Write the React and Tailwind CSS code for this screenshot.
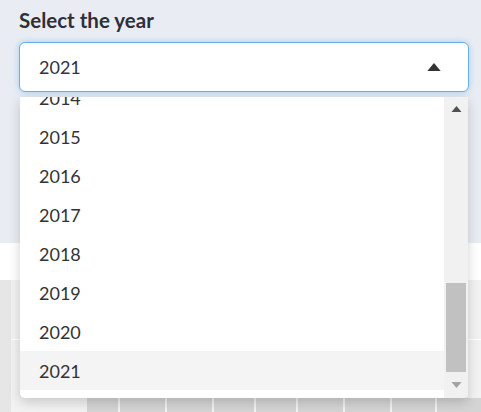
import { useState } from "react";

const years = Array.from({ length: 22 }, (_, i) => 2000 + i);

function Caret({ up = true, className = "" }) {
  return (
    <svg viewBox="0 0 10 6" className={className} fill="currentColor">
      {up ? <path d="M0 6 L5 0 L10 6 Z" /> : <path d="M0 0 L5 6 L10 0 Z" />}
    </svg>
  );
}

function Backdrop() {
  const cells = [31, 45, 45, 40, 40, 45, 45, 43, 44];
  return (
    <div className="flex flex-col flex-1">
      <div className="h-[37px] bg-white" />
      <div className="flex flex-1">
        <div className="w-[12px] bg-[#e6e6e6]" />
        <div className="flex-1 flex flex-col bg-[#f2f2f2]">
          <div className="flex-1 border-b border-white" />
          <div className="flex-1" />
          <div className="h-[14px] flex pl-[76px] gap-[2px]">
            {cells.map((w, i) => (
              <div key={i} style={{ width: w }} className="bg-[#d4d4d4]" />
            ))}
          </div>
        </div>
      </div>
    </div>
  );
}

export default function App() {
  const [selected] = useState(2021);
  return (
    <div
      className="relative w-[481px] h-[412px] overflow-hidden bg-white flex flex-col text-[#31333f]"
      style={{ fontFamily: "'Source Sans Pro', Lato, 'Noto Sans', sans-serif" }}
    >
      <div className="h-[243px] bg-[#e9edf3] px-[19px] pt-[8px] shrink-0">
        <div className="text-[20.5px] font-bold leading-[24px] text-[#2e2f38]">Select the year</div>
        <div className="mt-[10px] h-[50px] w-[450px] rounded-[6px] border border-[#66afe9] bg-white shadow-[0_0_6px_rgba(102,175,233,0.55)] flex items-center pl-[19px] pr-[27px]">
          <span className="text-[18px] flex-1 pt-[1px]">{selected}</span>
          <Caret className="w-[14px] h-[8px] text-[#333]" />
        </div>
      </div>
      <Backdrop />

      <div className="absolute left-[20px] top-[97px] w-[448px] h-[301px] bg-white rounded-b-[5px] shadow-[0_4px_12px_rgba(0,0,0,0.18)] flex overflow-hidden">
        <div className="flex-1 flex flex-col justify-end overflow-hidden pb-[8px]">
          {years.map((y) => (
            <div
              key={y}
              className={`h-[39px] shrink-0 flex items-center pl-[19px] pt-[1px] text-[18px] text-[#333] ${
                y === selected ? "bg-[#f4f4f4]" : ""
              }`}
            >
              {y}
            </div>
          ))}
        </div>
        <div className="w-[24px] bg-[#f1f1f1] flex flex-col items-center">
          <div className="h-[24px] flex items-center justify-center">
            <Caret className="w-[11px] h-[6px] text-[#505050]" />
          </div>
          <div className="flex-1 w-full flex flex-col justify-end px-[2px]">
            <div className="h-[89px] bg-[#c1c1c1]" />
          </div>
          <div className="h-[26px] flex items-center justify-center">
            <Caret up={false} className="w-[11px] h-[6px] text-[#a3a3a3]" />
          </div>
        </div>
      </div>
    </div>
  );
}
